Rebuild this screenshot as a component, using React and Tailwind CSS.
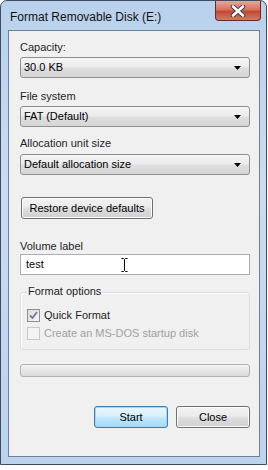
import React from 'react'

const font = { fontFamily: '"Liberation Sans", Arial, sans-serif' }

const Combo = ({ value }) => (
  <div className="h-[21px] w-[230px] rounded-[3px] border border-[#8e8f8f] bg-[linear-gradient(to_bottom,#f5f5f5_0%,#ececec_45%,#dedede_55%,#d6d6d6_100%)] flex items-center justify-between pl-[3px] pr-[7px] text-[#000]">
    <span className="leading-[15px]">{value}</span>
    <svg width="8" height="4" viewBox="0 0 8 4">
      <path d="M0 0 H7 L3.5 4 Z" fill="#000" />
    </svg>
  </div>
)

const Button = ({ children, primary, className }) => (
  <div
    className={
      'h-[22px] rounded-[3px] border flex items-center justify-center whitespace-nowrap leading-[15px] text-[#000] ' +
      (primary
        ? 'border-[#3c7fb1] bg-[linear-gradient(to_bottom,#eaf6fd_0%,#d9f0fc_45%,#bee6fd_55%,#a7d9f5_100%)] shadow-[inset_0_0_0_1px_#9ed6f5] '
        : 'border-[#707070] bg-[linear-gradient(to_bottom,#f2f2f2_0%,#ebebeb_45%,#dddddd_55%,#cfcfcf_100%)] shadow-[inset_0_0_0_1px_#fcfcfc] ') +
      (className || '')
    }
  >
    {children}
  </div>
)

const Check = ({ checked, disabled, label }) => (
  <div className="flex items-center gap-[4px] h-[18px]">
    <div
      className={
        'w-[13px] h-[13px] border flex items-center justify-center ' +
        (disabled
          ? 'border-[#c8c8c8] bg-[#f4f4f4]'
          : 'border-[#8f8f8f] bg-[linear-gradient(135deg,#dcdcdc,#f6f6f6)]')
      }
    >
      {checked && (
        <svg width="9" height="9" viewBox="0 0 9 9">
          <path d="M1 4.5 L3.5 7 L8 1" stroke="#6f7c8c" strokeWidth="1.8" fill="none" />
        </svg>
      )}
    </div>
    <span className={'leading-[15px] ' + (disabled ? 'text-[#a0a0a0]' : 'text-[#1e1e1e]')}>{label}</span>
  </div>
)

export default function App() {
  return (
    <div className="w-[268px] h-[470px] bg-white text-[11px]" style={font}>
      <div className="w-[267px] h-[465px] rounded-t-[7px] border border-[#3d4c5e] bg-[linear-gradient(to_bottom,#b9d1ec_0%,#c9dcf1_40%,#bcd3ee_100%)] flex flex-col pl-[7px] pr-[6px] pb-[7px]">
        {/* title bar */}
        <div className="h-[29px] flex items-start relative">
          <span className="mt-[9px] ml-[2px] leading-[15px] text-[12px] text-[#111]">Format Removable Disk (E:)</span>
          <div className="absolute right-[-1px] top-0 w-[46px] h-[20px] rounded-b-[4px] border border-t-0 border-[#6b2a20] bg-[linear-gradient(to_bottom,#e8a898_0%,#d4735f_45%,#c24a33_55%,#d07a62_100%)] flex items-center justify-center">
            <svg width="16" height="12" viewBox="0 0 16 12">
              <path d="M3 1.5 L13 10.5 M13 1.5 L3 10.5" stroke="#3c3c3c" strokeWidth="4.5" strokeLinecap="round" />
              <path d="M3 1.5 L13 10.5 M13 1.5 L3 10.5" stroke="#ffffff" strokeWidth="2.6" strokeLinecap="round" />
            </svg>
          </div>
        </div>
        {/* client area */}
        <div className="flex-1 border border-[#6e7f92] bg-[#f0f0f0] pl-[11px] flex flex-col">
          <div className="mt-[9px] leading-[15px] text-[#1e1e1e]">Capacity:</div>
          <div className="mt-[2px]"><Combo value="30.0 KB" /></div>
          <div className="mt-[11px] leading-[15px] text-[#1e1e1e]">File system</div>
          <div className="mt-[2px]"><Combo value="FAT (Default)" /></div>
          <div className="mt-[9px] leading-[15px] text-[#1e1e1e]">Allocation unit size</div>
          <div className="mt-[3px]"><Combo value="Default allocation size" /></div>
          <Button className="mt-[22px] ml-[1px] w-[132px]">Restore device defaults</Button>
          <div className="mt-[20px] leading-[15px] text-[#1e1e1e]">Volume label</div>
          <div className="mt-[0px] h-[21px] w-[230px] border border-[#abadb3] border-t-[#abadb3] bg-white flex items-center pl-[5px] relative">
            <span className="leading-[15px] text-[#000]">test</span>
            <svg className="absolute left-[100px] top-[3px]" width="7" height="14" viewBox="0 0 7 14">
              <path d="M0.5 0.5 H2.5 L3.5 1.5 L4.5 0.5 H6.5 M3.5 1.5 V12.5 M0.5 13.5 H2.5 L3.5 12.5 L4.5 13.5 H6.5" stroke="#000" strokeWidth="1" fill="none" />
            </svg>
          </div>
          <div className="mt-[17px] relative w-[230px] h-[58px] rounded-[3px] border border-[#d5dfe5] shadow-[inset_1px_1px_0_#fff] flex flex-col pl-[6px] pt-[13px]">
            <span className="absolute left-[6px] top-[-9px] px-[1px] bg-[#f0f0f0] leading-[15px] text-[#1e1e1e]">Format options</span>
            <Check checked label="Quick Format" />
            <Check disabled label="Create an MS-DOS startup disk" />
          </div>
          <div className="mt-[14px] w-[230px] h-[13px] rounded-[3px] border border-[#b2b2b2] bg-[linear-gradient(to_bottom,#f3f3f3_0%,#e6e6e6_50%,#dadada_100%)]" />
          <div className="mt-[29px] flex gap-[8px] pl-[74px]">
            <Button primary className="w-[74px]">Start</Button>
            <Button className="w-[74px]">Close</Button>
          </div>
        </div>
      </div>
    </div>
  )
}
